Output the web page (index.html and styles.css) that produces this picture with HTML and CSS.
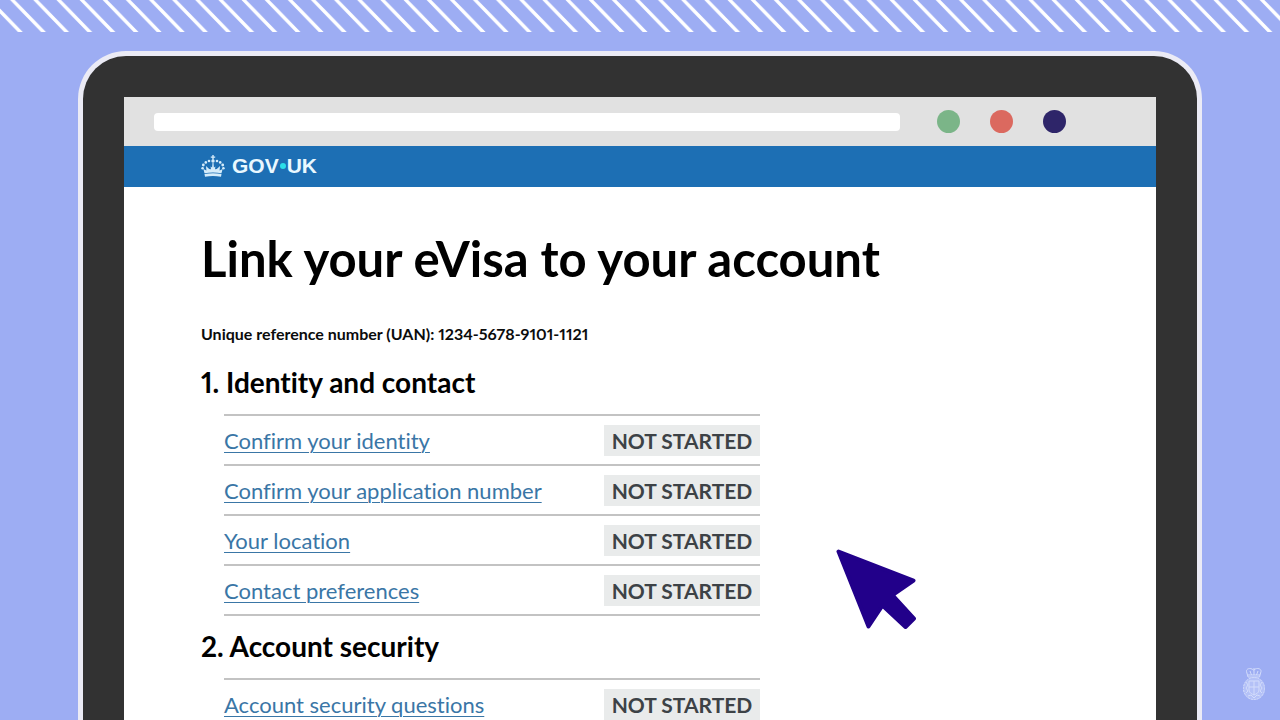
FILE: index.html
```html
<!doctype html>
<html lang="en">
  <head>
    <meta charset="UTF-8" />
    <meta name="viewport" content="width=device-width, initial-scale=1.0" />
    <title>Link your eVisa to your account</title>
    <link rel="stylesheet" href="styles.css">
  </head>
  <body>
    <svg class="stripes" aria-hidden="true">
      <defs>
        <pattern id="stripe" width="23.14" height="32" patternUnits="userSpaceOnUse">
          <path d="M-13 0h4.6L22.8 32h-4.8z M10.14 0h4.6L45.94 32h-4.8z" fill="#fff" />
        </pattern>
      </defs>
      <rect width="100%" height="32" fill="url(#stripe)" />
    </svg>

    <div class="device">
      <div class="screen">
        <div class="browser-bar">
          <input class="address" type="text" aria-label="Address" />
          <div class="dots">
            <span class="dot dot-green"></span>
            <span class="dot dot-red"></span>
            <span class="dot dot-navy"></span>
          </div>
        </div>

        <header class="gov-header">
          <a class="gov-logo" href="#">
            <svg class="crown" viewBox="0 0 24 22" aria-hidden="true">
              <g fill="#d5ecfa">
                <path d="M11.3 0h1.4v1.5h1.5v1.3h-1.5v2h-1.4v-2H9.8V1.5h1.5z" />
                <circle cx="12" cy="6" r="1.7" />
                <circle cx="8" cy="6" r="1.3" />
                <circle cx="4.8" cy="7.4" r="1.3" />
                <circle cx="2.3" cy="10" r="1.4" />
                <circle cx="1.6" cy="13.2" r="1.3" />
                <circle cx="16" cy="6" r="1.3" />
                <circle cx="19.2" cy="7.4" r="1.3" />
                <circle cx="21.7" cy="10" r="1.4" />
                <circle cx="22.4" cy="13.2" r="1.3" />
                <path d="M3.5 18.2L2.4 14l3 1.5L5 11l3.200 3 1.8.2L9.600 11.600l1.500 1L11.500 8h1l.4 4.600 1.500-1L14 14.200l1.800-.2L19 11l-.4 4.500 3-1.500-1.100 4.200C15 17.200 9 17.200 3.500 18.200z" />
                <path d="M3.500 19c5.500-1 11.500-1 17 0l-.5 2.700c-5.300-.8-10.700-.8-16 0z" />
              </g>
            </svg>
            <span class="gov-name">GOV<span class="gov-dot"></span>UK</span>
          </a>
        </header>

        <main class="page">
          <h1>Link your eVisa to your account</h1>
          <p class="reference">Unique reference number (UAN): 1234-5678-9101-1121</p>

          <h2>1. Identity and contact</h2>
          <ul class="tasks">
            <li><a href="#">Confirm your identity</a><strong class="tag">NOT STARTED</strong></li>
            <li><a href="#">Confirm your application number</a><strong class="tag">NOT STARTED</strong></li>
            <li><a href="#">Your location</a><strong class="tag">NOT STARTED</strong></li>
            <li><a href="#">Contact preferences</a><strong class="tag">NOT STARTED</strong></li>
          </ul>

          <h2>2. Account security</h2>
          <ul class="tasks">
            <li><a href="#">Account security questions</a><strong class="tag">NOT STARTED</strong></li>
          </ul>

          <svg class="cursor" viewBox="0 0 80 80" aria-hidden="true">
            <path d="M2.5 2.5L77.5 31.500 56.500 46 78 69.500 69.500 78 46.500 56.500 32.500 77.500z" fill="#22008a" stroke="#22008a" stroke-width="4" stroke-linejoin="round" />
          </svg>
        </main>
      </div>
    </div>

    <svg class="crest" viewBox="0 0 24 34" aria-hidden="true">
      <ellipse cx="12" cy="21.5" rx="11" ry="11.5" fill="#b4c1f7" />
      <g fill="none" stroke="#d3dcfb" stroke-width="1">
        <path d="M6 10L4.5 4.500C4 2 8 0 11.500 3c4-3 8-1 7.500 1.500L17.500 10z" />
        <path d="M6 8h12M12 1v7M8 4l1.500 4M16 4l-1.500 4" />
        <ellipse cx="12" cy="21.5" rx="10.5" ry="11" stroke-dasharray="2 1" />
        <path d="M7 14h10v9c0 3-3 4-5 5-2-1-5-2-5-5zM12 14v14M7 20h10" />
        <path d="M4 15l2 3-2 3 2 3-2 2M20 15l-2 3 2 3-2 3 2 2M6 29l3-1 3 3 3-3 3 1" />
      </g>
    </svg>
  </body>
</html>
```
FILE: styles.css
```css
* {
  box-sizing: border-box;
}

body {
  margin: 0;
  height: 100vh;
  display: flex;
  flex-direction: column;
  overflow: hidden;
  position: relative;
  background-color: #9dadf3;
  font-family: Lato, "Open Sans", sans-serif;
  font-variant-ligatures: none;
  font-variant-numeric: proportional-nums;
  color: #0b0c0c;
}

.stripes {
  display: block;
  width: 100%;
  height: 32px;
  flex: none;
}

.device {
  flex: 1;
  min-height: 0;
  margin: 19px 78px 0;
  padding: 41px 41px 0;
  border: 5px solid #ebebf5;
  border-bottom: 0;
  border-radius: 48px 48px 0 0;
  background-color: #323232;
  display: flex;
}

.screen {
  flex: 1;
  overflow: hidden;
  background-color: #fff;
}

.browser-bar {
  display: flex;
  align-items: center;
  gap: 37px;
  height: 49px;
  padding: 0 90px 0 30px;
  background-color: #e1e1e1;
}

.address {
  flex: 1;
  min-width: 0;
  height: 18px;
  padding: 0 8px;
  border: 0;
  border-radius: 4px;
  background-color: #fff;
}

.dots {
  display: flex;
  gap: 30px;
}

.dot {
  width: 23px;
  height: 23px;
  border-radius: 50%;
}

.dot-green {
  background-color: #7bb588;
}

.dot-red {
  background-color: #db695f;
}

.dot-navy {
  background-color: #2e2569;
}

.gov-header {
  display: flex;
  align-items: center;
  height: 41px;
  padding: 0 77px 2px;
  background-color: #1d6fb4;
}

.gov-logo {
  display: flex;
  align-items: center;
  gap: 7px;
  color: #e9f8ff;
  text-decoration: none;
}

.crown {
  width: 24px;
  height: 22px;
}

.gov-name {
  display: flex;
  align-items: center;
  gap: 1px;
  font: bold 21px/24px "Liberation Sans", Arial, sans-serif;
}

.gov-dot {
  width: 6px;
  height: 6px;
  border-radius: 50%;
  background-color: #2bdfe8;
}

.page {
  position: relative;
  padding: 43px 77px 20px;
}

h1 {
  margin: 0 0 36px;
  color: #000;
  font-size: 49px;
  line-height: 56px;
}

.reference {
  margin: 0 0 20px;
  font-size: 16px;
  font-weight: bold;
  line-height: 24px;
}

h2 {
  margin: 0 0 16px;
  color: #000;
  font-size: 28px;
  line-height: 32px;
}

.tasks {
  max-width: 536px;
  margin: 0 0 14px 23px;
  padding: 0;
  border-top: 2px solid #c3c3c3;
  list-style: none;
}

.tasks li {
  display: flex;
  align-items: center;
  justify-content: space-between;
  height: 50px;
  border-bottom: 2px solid #c3c3c3;
}

.tasks a {
  color: #3a76a6;
  font-size: 22px;
  text-decoration-thickness: 1px;
  text-underline-offset: 3px;
}

.tag {
  width: 156px;
  background-color: #e9ebeb;
  color: #3d4246;
  font-size: 21px;
  line-height: 31px;
  text-align: center;
}

.cursor {
  position: absolute;
  top: 362px;
  right: 240px;
  width: 80px;
  height: 80px;
}

.crest {
  position: absolute;
  right: 14px;
  bottom: 19px;
  width: 24px;
  height: 34px;
}
```
